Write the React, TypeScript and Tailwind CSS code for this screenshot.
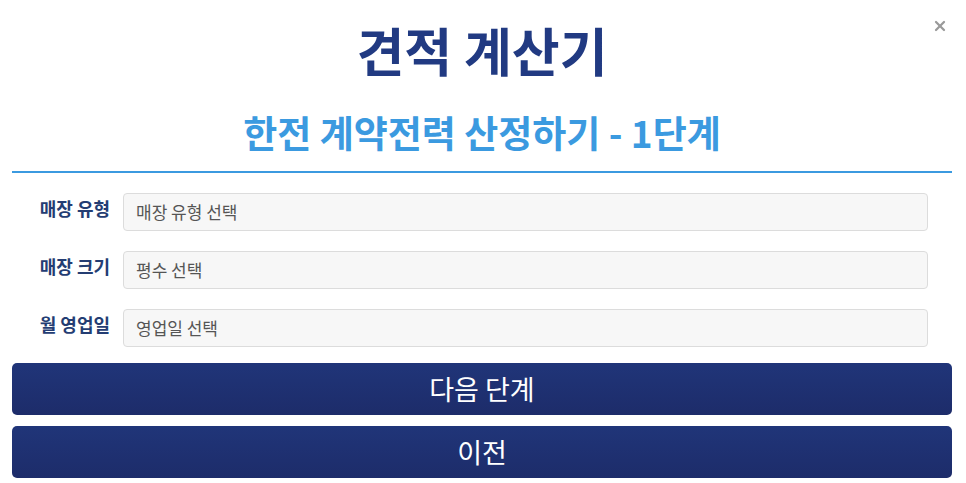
import { X } from "lucide-react";

const font = { fontFamily: '"Noto Sans CJK KR", "Noto Sans", sans-serif' };

const rows = [
  { label: "매장 유형", placeholder: "매장 유형 선택" },
  { label: "매장 크기", placeholder: "평수 선택" },
  { label: "월 영업일", placeholder: "영업일 선택" },
];

export default function App() {
  return (
    <div
      className="relative w-[966px] h-[483px] bg-white overflow-hidden"
      style={font}
    >
      {/* close */}
      <button className="absolute right-[18px] top-[18px] text-[#9a9a9a]">
        <X className="w-[16px] h-[16px]" strokeWidth={3.4} />
      </button>

      <div className="flex flex-col pl-[12px] pr-[14px]">
        <h1 className="text-center text-[52px] leading-[60px] font-bold text-[#213a82] mt-[20px]">
          견적 계산기
        </h1>
        <h2 className="text-center text-[37px] leading-[44px] font-bold text-[#3b9ae0] mt-[30px]">
          한전 계약전력 산정하기 - 1단계
        </h2>
        <div className="h-[2px] bg-[#3b9ae0] mt-[17px]" />

        {/* form */}
        <div className="flex flex-col gap-[20px] mt-[20px] pr-[24px]">
          {rows.map((r) => (
            <div key={r.label} className="flex items-start">
              <label className="w-[111px] pr-[13px] pt-[4px] text-right text-[18px] leading-[22px] font-bold text-[#243d73]">
                {r.label}
              </label>
              <div className="flex-1 h-[38px] flex items-center px-[12px] bg-[#f7f7f7] border border-[#dcdcdc] rounded-[4px] text-[17px] text-[#555]">
                {r.placeholder}
              </div>
            </div>
          ))}
        </div>

        {/* buttons */}
        <div className="flex flex-col gap-[11px] mt-[16px]">
          <button className="h-[52px] rounded-[5px] bg-gradient-to-b from-[#203579] to-[#1d2c6a] text-white text-[27px]">
            다음 단계
          </button>
          <button className="h-[52px] rounded-[5px] bg-gradient-to-b from-[#203579] to-[#1d2c6a] text-white text-[27px]">
            이전
          </button>
        </div>
      </div>
    </div>
  );
}
